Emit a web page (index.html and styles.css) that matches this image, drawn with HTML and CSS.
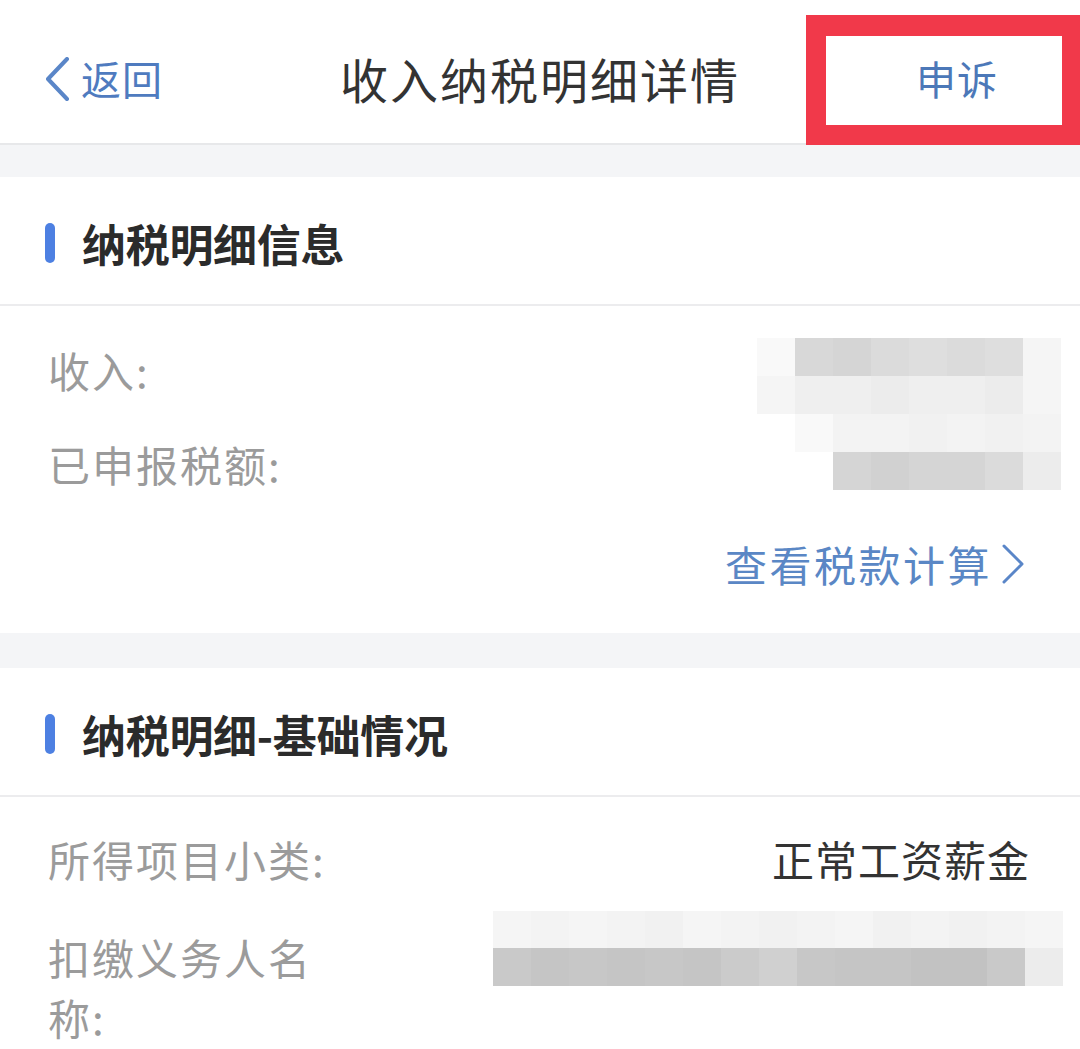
FILE: index.html
```html
<!DOCTYPE html>
<html lang="zh-CN">
<head>
<meta charset="utf-8">
<title>收入纳税明细详情</title>
<link rel="stylesheet" href="styles.css">
</head>
<body>
<div class="page">
  <header class="navbar">
    <div class="nav-left">
      <svg class="back-icon" width="26" height="44" viewBox="0 0 26 44"><polyline points="23,2 4,22 23,42" fill="none" stroke="#5a86c8" stroke-width="4" stroke-linecap="round" stroke-linejoin="round"/></svg>
      <span class="back-text">返回</span>
    </div>
    <div class="nav-title">收入纳税明细详情</div>
    <div class="nav-right"><span class="appeal">申诉</span></div>
    <div class="highlight"></div>
  </header>

  <div class="gap gap-top"></div>

  <section class="card">
    <div class="card-head"><span class="bar"></span><span class="card-title">纳税明细信息</span></div>
    <div class="card-body body-one">
      <div class="row"><span class="label">收入:</span><span class="value"></span></div>
      <div class="row"><span class="label">已申报税额:</span><span class="value"></span></div>
      <div class="row link-row"><span class="link">查看税款计算</span><svg class="link-icon" width="26" height="42" viewBox="0 0 26 42"><polyline points="4,3 22,21 4,39" fill="none" stroke="#5a86c8" stroke-width="3" stroke-linecap="round" stroke-linejoin="round"/></svg></div>
      <div class="mosaic mosaic-one">
        <span class="g0"></span><span class="g5"></span><span class="g6"></span><span class="g4"></span><span class="g3"></span><span class="g4"></span><span class="g3"></span><span class="g1"></span>
        <span class="g1"></span><span class="g2"></span><span class="g2"></span><span class="g2b"></span><span class="g2"></span><span class="g2"></span><span class="g2b"></span><span class="g1"></span>
        <span class="g00"></span><span class="g0"></span><span class="g1b"></span><span class="g1b"></span><span class="g1c"></span><span class="g1b"></span><span class="g1c"></span><span class="g1b"></span>
        <span class="g00"></span><span class="g00"></span><span class="g6"></span><span class="g7"></span><span class="g6"></span><span class="g6"></span><span class="g4"></span><span class="g2b"></span>
      </div>
    </div>
  </section>

  <div class="gap gap-mid"></div>

  <section class="card">
    <div class="card-head"><span class="bar"></span><span class="card-title">纳税明细-基础情况</span></div>
    <div class="card-body body-two">
      <div class="row"><span class="label">所得项目小类:</span><span class="value">正常工资薪金</span></div>
      <div class="row"><span class="label">扣缴义务人名称:</span><span class="value"></span></div>
      <div class="mosaic mosaic-two">
        <span class="g1"></span><span class="g1b"></span><span class="g1"></span><span class="g1b"></span><span class="g1c"></span><span class="g1"></span><span class="g1b"></span><span class="g1c"></span><span class="g1b"></span><span class="g1"></span><span class="g1c"></span><span class="g1b"></span><span class="g1c"></span><span class="g1b"></span><span class="g1"></span>
        <span class="h2"></span><span class="h4"></span><span class="h3"></span><span class="h4"></span><span class="h3"></span><span class="h4"></span><span class="h1"></span><span class="h0"></span><span class="h3"></span><span class="h4"></span><span class="h4"></span><span class="h5"></span><span class="h5"></span><span class="h2"></span><span class="g2b"></span>
      </div>
    </div>
  </section>
</div>
</body>
</html>
```

FILE: styles.css
```css
* { box-sizing: border-box; }
html, body { margin: 0; padding: 0; background: #ffffff; }
body {
  font-family: "Noto Sans CJK SC", "Noto Sans", "Liberation Sans", sans-serif;
  color: #333333;
}
.page { width: 1080px; position: relative; overflow: hidden; }

/* nav */
.navbar {
  height: 145px;
  padding-top: 13px;
  border-bottom: 2px solid #e7e8ea;
  display: grid;
  grid-template-columns: 1fr auto 1fr;
  align-items: center;
  background: #fff;
}
.nav-left { display: flex; align-items: center; padding-left: 44px; }
.back-icon { display: block; margin-right: 11px; margin-top: 1px; }
.back-text { font-size: 40px; line-height: 1; color: #4f7bbf; letter-spacing: 1px; }
.nav-title { font-size: 48px; line-height: 1; color: #333; letter-spacing: 2px; }
.nav-right { display: flex; justify-content: flex-end; padding-right: 82px; }
.appeal { font-size: 40px; line-height: 1; color: #4c78b8; letter-spacing: 1px; }
.highlight {
  position: absolute;
  left: 806px; top: 15px;
  width: 274px; height: 130px;
  border: 20px solid #f1394a;
  border-top-width: 21px;
  border-right-width: 18px;
}

/* gaps */
.gap { background: #f4f5f7; }
.gap-top { height: 32px; }
.gap-mid { height: 35px; }

/* cards */
.card { background: #fff; }
.card-head {
  height: 129px;
  border-bottom: 2px solid #ececee;
  display: flex;
  align-items: center;
  padding-left: 45px;
  padding-top: 4px;
}
.bar { width: 10px; height: 40px; border-radius: 5px; background: #4d80e2; margin-right: 27px; }
.card-title { font-size: 44px; font-weight: 700; line-height: 1; color: #2b2b2b; letter-spacing: -0.3px; }

.card-body { position: relative; padding: 0 50px 0 48px; display: flex; flex-direction: column; }
.body-one { padding-top: 34px; padding-bottom: 39px; gap: 34px; }
.body-two { padding-top: 32px; padding-bottom: 0; gap: 38px; }

.row { display: flex; align-items: flex-start; font-size: 42px; line-height: 60px; }
.label { width: 290px; flex: none; color: #9b9b9b; letter-spacing: 2px; }
.value { flex: 1; text-align: right; color: #333; letter-spacing: 1px; }
.link-row { justify-content: flex-end; align-items: center; margin-top: 6px; margin-right: 4px; }
.link { color: #5a87c5; letter-spacing: 2.5px; }
.link-icon { display: block; margin-left: 8px; }

/* mosaic over redacted values */
.mosaic { position: absolute; display: grid; grid-auto-rows: 38px; }
.mosaic span { display: block; }
.mosaic-one { left: 757px; top: 32px; grid-template-columns: repeat(8, 38px); }
.mosaic-two { left: 493px; top: 114px; grid-template-columns: repeat(15, 38px); grid-template-rows: 37px 38px; }

.g00 { background: transparent; }
.g0 { background: #f9f9f9; }
.g1 { background: #f5f5f5; }
.g1b { background: #f3f3f3; }
.g1c { background: #f1f1f1; }
.g2 { background: #efefef; }
.g2b { background: #ececec; }
.g3 { background: #dedede; }
.g4 { background: #dbdbdb; }
.g5 { background: #d8d8d8; }
.g6 { background: #d5d5d5; }
.g7 { background: #d1d1d1; }
.h0 { background: #d0d0d0; }
.h1 { background: #cbcbcb; }
.h2 { background: #c9c9c9; }
.h3 { background: #c7c7c7; }
.h4 { background: #c5c5c5; }
.h5 { background: #c2c2c2; }
```
